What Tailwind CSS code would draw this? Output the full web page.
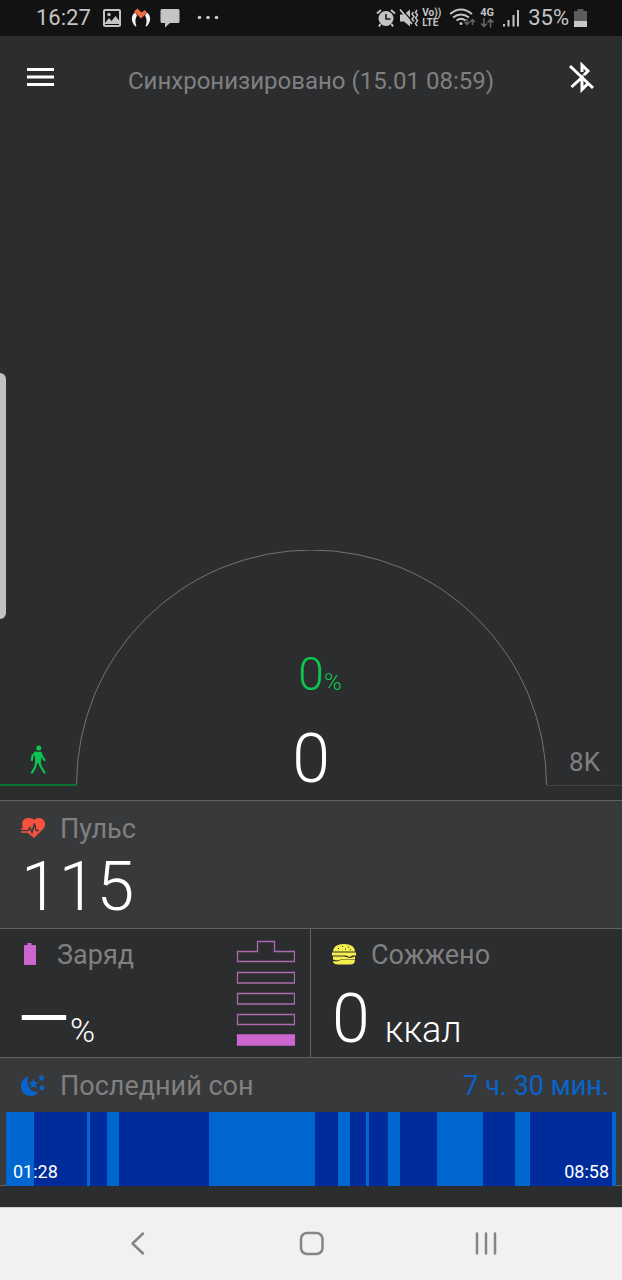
<!DOCTYPE html>
<html lang="ru">
<head>
  <meta charset="UTF-8" />
  <meta name="viewport" content="width=device-width, initial-scale=1.0"/>
  <title>Активность</title>
  <script src="https://cdn.jsdelivr.net/npm/@tailwindcss/browser@4"></script>
</head>
<body class="relative flex min-h-screen flex-col bg-[#2c2d2f] font-['Roboto',sans-serif] text-white">

  <!-- status bar -->
  <div class="flex h-9 items-center justify-between bg-[#121212] pl-9 pr-[35px] text-[#c4c4c4]">
    <div class="flex items-center">
      <span class="text-[22px] leading-9">16:27</span>
      <svg class="ml-3 h-[18px] w-[18px]" viewBox="0 0 18 18" fill="none" stroke="currentColor" stroke-width="2">
        <rect x="1" y="1" width="16" height="16" rx="1"/>
        <path d="M2 14l4-5 2.500 3 4-5 4 5v3H2z" fill="currentColor" stroke="none"/>
        <circle cx="6" cy="5.500" r="1.700" fill="currentColor" stroke="none"/>
      </svg>
      <svg class="ml-[10px] h-5 w-5" viewBox="0 0 20 20">
        <path d="M4 4.500C-.5 8 0 14 4.500 18.500l1-.5C4 14.500 4 11 6 7.500zM16 4.500c4.500 3.500 4 9.500-.5 14l-1-.5c1.500-3.500 1.500-7-.5-10.500z" fill="#f4f4f4"/>
        <path d="M3 3.500L6.500.5l4 4 3.500-2.500 2 3-6 5.500z" fill="#ee6c45"/>
      </svg>
      <svg class="ml-[9px] h-5 w-5" viewBox="0 0 20 20" fill="currentColor"><path d="M2 1h16q1.500 0 1.500 1.500v11q0 1.500-1.500 1.500h-8l-5 4.500V15H2Q.5 15 .5 13.500v-11Q.5 1 2 1z"/></svg>
      <svg class="ml-4 h-5 w-6" viewBox="0 0 24 20" fill="currentColor"><circle cx="3.500" cy="9.500" r="1.800"/><circle cx="12" cy="9.500" r="1.800"/><circle cx="20.500" cy="9.500" r="1.800"/></svg>
    </div>
    <div class="flex items-center">
      <svg class="h-5 w-5" viewBox="0 0 20 20" fill="none" stroke="currentColor" stroke-width="2">
        <circle cx="10" cy="10.500" r="7.500" fill="currentColor" stroke="none"/>
        <path d="M1 5.500L5 2M19 5.500L15 2M4.500 16L3 18.500M15.500 16l1.500 2.500"/>
        <path d="M10 6v5h4.500" stroke="#121212" stroke-width="1.500"/>
      </svg>
      <svg class="ml-[3px] h-5 w-5" viewBox="0 0 20 20" fill="none" stroke="currentColor" stroke-width="1.500">
        <path d="M1 6.500h4l6-5v17l-6-5H1z" fill="currentColor" stroke="none"/>
        <path d="M2.500 1L14 14" stroke="#121212" stroke-width="1.200"/>
        <path d="M1 1.500L13 16" stroke-width="1.800"/>
        <path d="M14.500 4l-1.500 2 2 2.500-2 2.500 2 2.500M18 2l-1.500 2.500 2 2.500-2 3 2 2.500-2 3 1.500 2.500"/>
      </svg>
      <span class="ml-[3px] flex flex-col text-[10px] font-bold leading-[10px]"><span>Vo))</span><span>LTE</span></span>
      <svg class="ml-[9px] h-5 w-[26px]" viewBox="0 0 26 20" fill="none" stroke="currentColor" stroke-width="2">
        <path d="M0 6Q11-3 22 6M3 9.500Q11 3.500 19 9.500M6.500 12.500q4.500-3.500 9 0"/>
        <circle cx="11" cy="15.500" r="1.500" fill="currentColor" stroke="none"/>
        <path d="M17 11v5M14.500 14l2.500 2.500 2.500-2.500M22.500 17v-5M20 14l2.500-2.500L25 14" stroke="#666" stroke-width="1.500"/>
      </svg>
      <span class="ml-1 flex flex-col items-center text-[11px] font-bold leading-[10px]">
        <span>4G</span>
        <svg class="h-[10px] w-[14px]" viewBox="0 0 14 10" fill="none" stroke="#666" stroke-width="1.500"><path d="M4 0v8M1 5.500l3 3 3-3M10.500 9.500V2M7.500 4.500l3-3 3 3"/></svg>
      </span>
      <svg class="ml-2 h-5 w-[18px]" viewBox="0 0 18 20" fill="currentColor"><path d="M1 16h2v2.500H1zM5.500 12h2v6.500h-2zM10.500 7h2v11.500h-2zM15 2h2v16.500h-2z"/></svg>
      <span class="ml-2 text-[22px] leading-9">35%</span>
      <svg class="ml-[5px] h-[18px] w-[13px]" viewBox="0 0 13 18"><path d="M3.500 0h6v2H13v14H0V2h3.500z" fill="#5c5c5c"/><path d="M0 12h13v6H0z" fill="#c9c9c9"/></svg>
    </div>
  </div>

  <!-- top bar -->
  <header class="flex h-[82px] items-center justify-between px-[26px]">
    <button type="button" aria-label="Меню" class="flex h-7 w-7 items-center">
      <svg class="h-7 w-7" viewBox="0 0 28 28" fill="#fff"><path d="M1 5h27v3H1zM1 12.500h27v3H1zM1 20h27v3H1z"/></svg>
    </button>
    <p class="pt-2 text-[24px] leading-8 text-[#808080]">Синхронизировано (15.01 08:59)</p>
    <button type="button" aria-label="Bluetooth выключен" class="h-8 w-7">
      <svg class="h-8 w-7" viewBox="0 0 28 32" fill="none" stroke="#fff" stroke-width="3">
        <path d="M2 5l23 22"/>
        <path d="M14 11V4l6 6-4 4M3.500 26L14 16.500V28.500l6-6"/>
      </svg>
    </button>
  </header>

  <!-- daily steps -->
  <main class="flex flex-1 flex-col justify-end pb-[14px]">
    <div class="grid">
      <svg class="w-full [grid-area:1/1]" viewBox="0 0 622 236" fill="none">
        <path d="M76.500 235A235 235 0 0 1 546.500 235" stroke="#737373"/>
        <path d="M0 235H77" stroke="#08742f" stroke-width="2"/>
        <path d="M547 235.500H622" stroke="#444547"/>
      </svg>
      <div class="z-10 flex items-end justify-between pl-[25px] pr-[22px] [grid-area:1/1]">
        <svg class="mb-3 h-[29px] w-[26px]" viewBox="0 0 26 29" fill="none" stroke="#0bc550" stroke-linecap="round" stroke-linejoin="round">
          <circle cx="13.800" cy="3" r="2.500" fill="#0bc550" stroke="none"/>
          <path d="M10.500 7.500h5l.3 4-.8 6h-4z" fill="#0bc550" stroke-width="1.500"/>
          <path d="M10.500 7.500L7.500 11l-.7 4M15.500 8l2 4 2 3M11.500 17l-1.500 5.500-3 5M14 17l2 5 3.500 5.500" stroke-width="2.200"/>
        </svg>
        <span class="mb-2 text-[26px] leading-8 text-[#808080]">8K</span>
      </div>
      <div class="flex flex-col items-center justify-end font-light [grid-area:1/1]">
        <p class="pl-[18px] text-[46px] leading-[56px] text-[#0bc550]">0<span class="text-[24px] leading-none">%</span></p>
        <p class="mt-[30px] text-[68px] leading-[54px]">0</p>
      </div>
    </div>
  </main>

  <!-- heart rate -->
  <section class="border-t border-[#606163] bg-[#38393b] px-[21px] pb-[5px] pt-3">
    <div class="flex h-8 items-center gap-[15px]">
      <svg class="h-6 w-6" viewBox="0 0 24 24">
        <path d="M13 21L3 13C-1 6.500 2 1 7 1c2.500 0 4.500.5 6 2 1.500-1.500 3-2 5-2 5.500 0 8 6 4.500 10.500z" fill="#f8523f"/>
        <path d="M0 13.500h7l2-3 2 5 2.500-9L15 13.500h3" fill="none" stroke="#38393b" stroke-width="1.500"/>
        <path d="M0 12h6M0 15h6.500" fill="none" stroke="#f8523f" stroke-width="1.500"/>
      </svg>
      <h2 class="text-[27px] leading-8 text-[#808080]">Пульс</h2>
    </div>
    <p class="mt-[6px] text-[68px] font-light leading-[72px]">115</p>
  </section>

  <div class="grid grid-cols-2 border-t border-[#606163]">
    <!-- battery -->
    <section class="flex justify-between border-r border-[#606163] pb-[2px] pl-[21px] pr-[15px] pt-[10px]">
      <div>
        <div class="flex h-8 items-center gap-[18px]">
          <svg class="h-6 w-[18px]" viewBox="0 0 18 24" fill="#cb66cf"><path d="M6.500 0h4v2H14q1 0 1 1V21q0 1-1 1H4q-1 0-1-1V3q0-1 1-1h2.500z"/></svg>
          <h2 class="text-[27px] leading-8 text-[#808080]">Заряд</h2>
        </div>
        <p class="-ml-1 mt-3 text-[68px] leading-[72px]">—<span class="text-[34px] font-light leading-none">%</span></p>
      </div>
      <svg class="mt-px h-[107px] w-[59px]" viewBox="0 0 59 107" fill="none" stroke="#aa6cae" stroke-width="1.300">
        <path d="M1.500 11.500h20V1.500h17v10h20v10h-57zM1.500 32.500h57v10.500h-57zM1.500 53.500h57v10.500h-57zM1.500 74.500h57v10h-57z"/>
        <path d="M1.500 95h57v10h-57z" fill="#cb66cf" stroke="#cb66cf"/>
      </svg>
    </section>
    <!-- calories -->
    <section class="pb-[2px] pl-[21px] pr-4 pt-[10px]">
      <div class="flex h-8 items-center gap-[15px]">
        <svg class="h-6 w-6" viewBox="0 0 24 24" fill="#f5ef4e">
          <path d="M1 8.500C1 4 5 1 12 1s11 3 11 7.500z"/>
          <path d="M0 9.500h24v3h-4l-2 1.500-4-1.500H0z"/>
          <path d="M1 13.500h11l6 1.500 5-1.500V16.500H9l-4 1-4-1z"/>
          <path d="M1 18l4 .5 4-1.500h14c0 3-2 4.500-5 4.500H6c-3 0-5-1-5-3.500z"/>
          <path d="M6 5h1v1H6zM10 3h1v1h-1zM13 5.500h1v1h-1zM16 3.500h1v1h-1zM18 6h1v1h-1z" fill="#2c2d2f"/>
        </svg>
        <h2 class="text-[27px] leading-8 text-[#808080]">Сожжено</h2>
      </div>
      <p class="mt-3 text-[68px] font-light leading-[72px]">0<span class="ml-[15px] text-[36px] leading-none">ккал</span></p>
    </section>
  </div>

  <!-- last sleep -->
  <section class="border-y border-[#606163] bg-[#38393b] px-[6px] pt-3">
    <div class="flex h-8 items-center px-[15px]">
      <svg class="h-6 w-6" viewBox="0 0 24 24" fill="#0864cc">
        <path d="M7.500 2.500C2 4 0 8 0 12.500 0 18 4.500 22 10 22c3.500 0 6-1.500 7-4.500C11 19.500 4 12 7.500 2.500z"/>
        <path d="M12.500 4.500l1.400 3.400 3.600.3-2.700 2.400.9 3.600-3.200-1.900-3.200 1.900.9-3.600-2.700-2.400 3.600-.3z"/>
        <path d="M20.500 0l1.100 2.500 2.400.3-1.800 1.700.6 2.500-2.300-1.300L18.200 7l.6-2.500L17 2.800l2.400-.3z"/>
        <circle cx="21" cy="14" r="2.500"/>
      </svg>
      <h2 class="ml-[15px] text-[27px] leading-8 text-[#808080]">Последний сон</h2>
      <span class="-mr-2 ml-auto text-[27px] leading-8 text-[#0864cc]">7 ч. 30 мин.</span>
    </div>
    <div class="relative -mb-px mt-[10px] h-[74px]">
      <div id="sleepBar" class="flex h-full"></div>
      <div class="absolute inset-x-[7px] bottom-1 flex justify-between text-[18px] leading-5">
        <span>01:28</span>
        <span>08:58</span>
      </div>
    </div>
  </section>

  <!-- navigation bar -->
  <nav class="mt-[21px] flex h-[73px] items-center justify-around border-t border-[#cfcfcf] bg-[#f1f1f1] px-[50px]">
    <button type="button" aria-label="Назад">
      <svg class="h-7 w-7" viewBox="0 0 28 28" fill="none" stroke="#858585" stroke-width="2.500" stroke-linecap="round" stroke-linejoin="round"><path d="M20 3.500L9.500 13.500 20 23.500"/></svg>
    </button>
    <button type="button" aria-label="Домой">
      <svg class="h-7 w-7" viewBox="0 0 28 28" fill="none" stroke="#858585" stroke-width="2.500"><rect x="4" y="3" width="21.500" height="21" rx="6"/></svg>
    </button>
    <button type="button" aria-label="Недавние">
      <svg class="h-7 w-7" viewBox="0 0 28 28" fill="none" stroke="#858585" stroke-width="2.500" stroke-linecap="round"><path d="M6 3.500v20M15 3.500v20M24 3.500v20"/></svg>
    </button>
  </nav>

  <!-- edge panel handle -->
  <div class="absolute left-0 top-[373px] h-[246px] w-[6px] rounded-r-md bg-[#c0c1c3]"></div>

  <script>
    // phase lengths, light and deep sleep in turn
    const phases = [28, 53, 3, 17, 12, 90, 106, 23, 12, 16, 3, 19, 12, 37, 46, 32, 15, 82, 4];
    const bar = document.getElementById('sleepBar');
    phases.forEach((len, i) => {
      const div = document.createElement('div');
      div.className = i % 2 === 0 ? 'bg-[#0066d0]' : 'bg-[#002c9b]';
      div.style.flex = len;
      bar.appendChild(div);
    });
  </script>
</body>
</html>
